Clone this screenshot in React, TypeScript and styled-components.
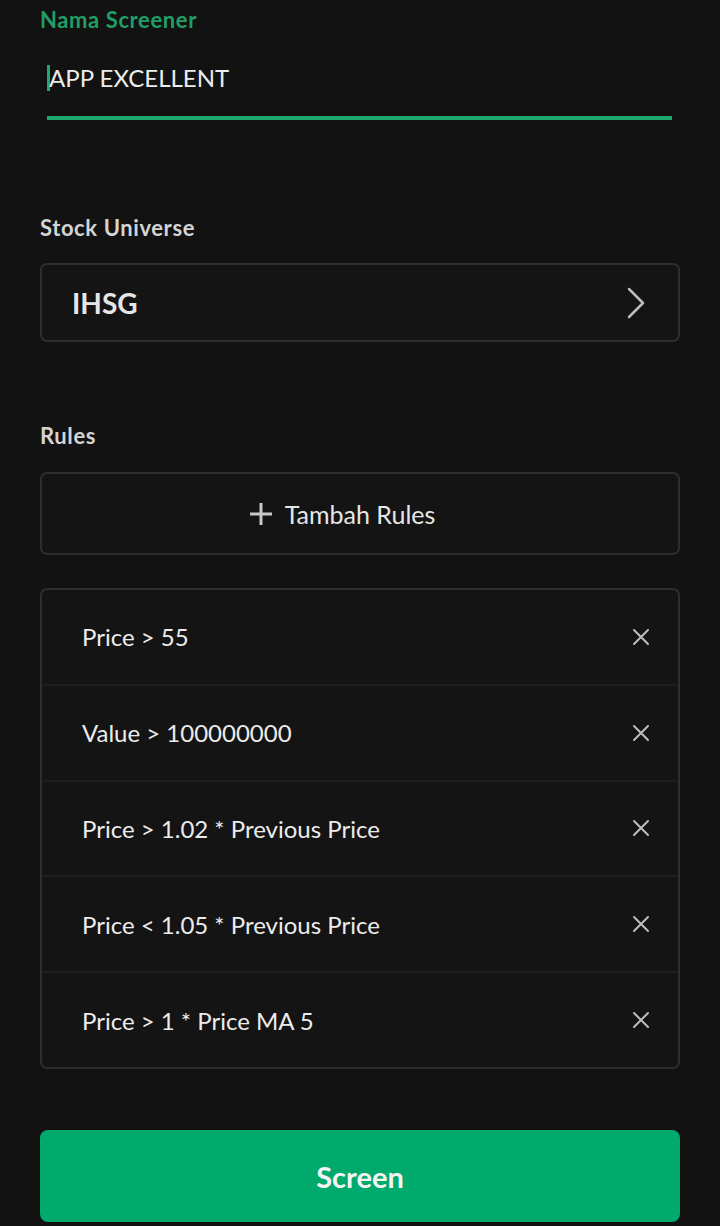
import React from "react";
import styled, { createGlobalStyle } from "styled-components";

// ============== Global =============
const GlobalStyle = createGlobalStyle`
  html, body {
    margin: 0;
    padding: 0;
    background: #121212;
  }
  body {
    font-family: Lato, "Open Sans", sans-serif;
    color: #e8e8e8;
  }
`;

// ============== Style Component =============
const Page = styled.div`
  width: 720px;
  height: 1226px;
  overflow: hidden;
  padding: 6px 40px 0;
  box-sizing: border-box;
  display: flex;
  flex-direction: column;
`;

const Label = styled.div<{ $accent?: boolean }>`
  font-size: 22px;
  font-weight: 700;
  letter-spacing: 0.6px;
  line-height: 28px;
  color: ${(p) => (p.$accent ? "#1f9f66" : "#d4d4d4")};
`;

const NameField = styled.div`
  margin: 22px 8px 0 7px;
  height: 64px;
  box-sizing: border-box;
  padding-top: 9px;
  border-bottom: 4px solid #1fa86d;
  display: flex;
  align-items: flex-start;
  line-height: 26px;
  font-size: 24px;
  color: #ececec;
`;

const Caret = styled.span`
  display: inline-block;
  width: 3px;
  height: 26px;
  background: #1fa86d;
  margin-right: -1px;
`;

const Section = styled.div<{ $top: number }>`
  margin-top: ${(p) => p.$top}px;
  display: flex;
  flex-direction: column;
`;

const Box = styled.div`
  margin-top: 21px;
  border: 2px solid #2e2e2e;
  border-radius: 7px;
  background: #141414;
  box-sizing: border-box;
`;

const Picker = styled(Box)`
  height: 79px;
  display: flex;
  align-items: center;
  justify-content: space-between;
  padding: 0 32px 0 30px;
  font-size: 28px;
  font-weight: 700;
  color: #e6e6e6;
`;

const AddButton = styled(Box)`
  height: 83px;
  display: flex;
  align-items: center;
  justify-content: center;
  gap: 12px;
  padding-right: 36px;
  font-size: 25px;
  color: #e6e6e6;
  margin-top: 22px;
`;

const RuleList = styled(Box)`
  margin-top: 33px;
  height: 481px;
  display: flex;
  flex-direction: column;
`;

const RuleRow = styled.div`
  flex: 1;
  display: flex;
  align-items: center;
  justify-content: space-between;
  padding: 0 28px 0 40px;
  font-size: 24px;
  color: #ececec;
  & + & {
    border-top: 2px solid #1e1e1e;
  }
`;

const ScreenButton = styled.button`
  margin-top: 61px;
  height: 92px;
  border: none;
  border-radius: 8px;
  background: #00aa6c;
  color: #f4f4f4;
  font-family: inherit;
  font-size: 29px;
  font-weight: 700;
`;

// ============== Data ================
const rules = [
  "Price > 55",
  "Value > 100000000",
  "Price > 1.02 * Previous Price",
  "Price < 1.05 * Previous Price",
  "Price > 1 * Price MA 5",
];

// ========================================
const Chevron = () => (
  <svg width="20" height="32" viewBox="0 0 20 32" fill="none">
    <path d="M3 2 L17 16 L3 30" stroke="#bdbdbd" strokeWidth="2.5" strokeLinecap="round" strokeLinejoin="round" />
  </svg>
);

const Plus = () => (
  <svg width="24" height="24" viewBox="0 0 24 24">
    <path d="M12 1 V23 M1 12 H23" stroke="#c8c8c8" strokeWidth="3" />
  </svg>
);

const Close = () => (
  <svg width="18" height="18" viewBox="0 0 18 18">
    <path d="M2 2 L16 16 M16 2 L2 16" stroke="#bdbdbd" strokeWidth="2" strokeLinecap="round" />
  </svg>
);

export default function App() {
  return (
    <>
      <GlobalStyle />
      <Page>
        <Label $accent>Nama Screener</Label>
        <NameField>
          <Caret />
          APP EXCELLENT
        </NameField>

        <Section $top={94}>
          <Label>Stock Universe</Label>
          <Picker>
            IHSG
            <Chevron />
          </Picker>
        </Section>

        <Section $top={80}>
          <Label>Rules</Label>
          <AddButton>
            <Plus />
            Tambah Rules
          </AddButton>
          <RuleList>
            {rules.map((r) => (
              <RuleRow key={r}>
                {r}
                <Close />
              </RuleRow>
            ))}
          </RuleList>
        </Section>

        <ScreenButton>Screen</ScreenButton>
      </Page>
    </>
  );
}
